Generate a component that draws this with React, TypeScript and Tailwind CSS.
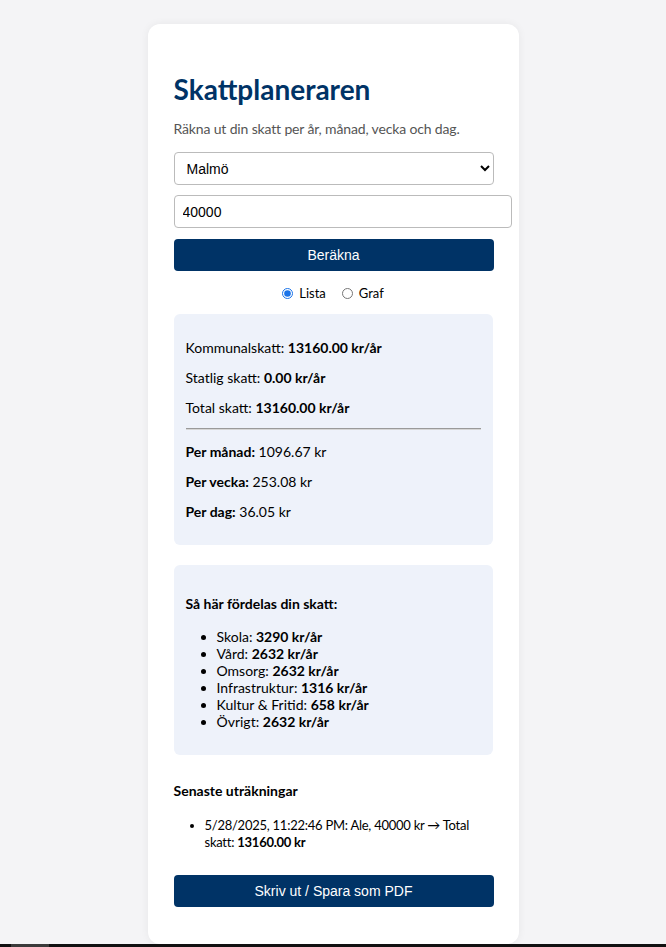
import { useState } from 'react';

const fordelning = [
  { namn: 'Skola', belopp: '3290' },
  { namn: 'Vård', belopp: '2632' },
  { namn: 'Omsorg', belopp: '2632' },
  { namn: 'Infrastruktur', belopp: '1316' },
  { namn: 'Kultur & Fritid', belopp: '658' },
  { namn: 'Övrigt', belopp: '2632' },
];

export default function App() {
  const [kommun, setKommun] = useState('Malmö');
  const [inkomst, setInkomst] = useState('40000');
  const [visning, setVisning] = useState<'lista' | 'graf'>('lista');

  return (
    <div className="min-h-[947px] bg-[#f4f4f6] pt-[24px] font-['Lato',sans-serif] text-[14px] text-black">
      {/* Kortet */}
      <div className="mx-auto w-[371px] rounded-[12px] bg-white px-[26px] pt-[48px] pb-[37px] shadow-[0_0_8px_rgba(0,0,0,0.06)]">
        <h1 className="text-[28px] leading-[34px] font-bold text-[#003366]">Skattplaneraren</h1>
        <p className="mt-[14px] leading-[18px] tracking-[-0.15px] text-[#555]">Räkna ut din skatt per år, månad, vecka och dag.</p>

        <select
          value={kommun}
          onChange={(e) => setKommun(e.target.value)}
          className="mt-[14px] block h-[33px] w-[320px] rounded-[4px] border border-[#bbb] bg-white px-[8px] font-['Liberation_Sans',sans-serif] text-[14px] text-black"
        >
          <option>Malmö</option>
          <option>Ale</option>
          <option>Stockholm</option>
          <option>Göteborg</option>
        </select>

        <input
          value={inkomst}
          onChange={(e) => setInkomst(e.target.value)}
          className="mt-[10px] block h-[33px] w-[338px] rounded-[4px] border border-[#bbb] px-[8px] font-['Liberation_Sans',sans-serif] text-[14px] text-black outline-none"
        />

        <button className="mt-[11px] block h-[32px] w-[320px] rounded-[4px] bg-[#003366] font-['Liberation_Sans',sans-serif] text-[14px] text-white">
          Beräkna
        </button>

        <div className="mt-[14px] flex items-center justify-center gap-[16px] text-[13px] leading-[16px]">
          <label className="flex items-center gap-[6px]">
            <input
              type="radio"
              checked={visning === 'lista'}
              onChange={() => setVisning('lista')}
              className="h-[11px] w-[11px] accent-[#1a73e8]"
            />
            Lista
          </label>
          <label className="flex items-center gap-[6px]">
            <input
              type="radio"
              checked={visning === 'graf'}
              onChange={() => setVisning('graf')}
              className="h-[11px] w-[11px]"
            />
            Graf
          </label>
        </div>

        {/* Resultat */}
        <div className="mt-[13px] rounded-[6px] bg-[#eef2fa] px-[12px] pt-[26px] pb-[25px]">
          <div className="flex flex-col gap-[14px] leading-[16px]">
            <p>Kommunalskatt: <b>13160.00 kr/år</b></p>
            <p>Statlig skatt: <b>0.00 kr/år</b></p>
            <p>Total skatt: <b>13160.00 kr/år</b></p>
          </div>
          <div className="mt-[12px] mb-[14px] h-[2px] w-[295px] border-t border-b border-t-[#9a9a9a] border-b-[#d6d6d6]" />
          <div className="flex flex-col gap-[14px] leading-[16px]">
            <p><b>Per månad:</b> 1096.67 kr</p>
            <p><b>Per vecka:</b> 253.08 kr</p>
            <p><b>Per dag:</b> 36.05 kr</p>
          </div>
        </div>

        {/* Fördelning */}
        <div className="mt-[20px] rounded-[6px] bg-[#eef2fa] px-[12px] pt-[31px] pb-[25px]">
          <p className="leading-[16px] font-bold">Så här fördelas din skatt:</p>
          <ul className="mt-[16px] list-disc pl-[31px] leading-[17px]">
            {fordelning.map((f) => (
              <li key={f.namn}>
                {f.namn}: <b>{f.belopp} kr/år</b>
              </li>
            ))}
          </ul>
        </div>

        {/* Historik */}
        <p className="mt-[28px] leading-[16px] font-bold">Senaste uträkningar</p>
        <ul className="mt-[18px] list-disc pl-[31px] leading-[17px]">
          <li className="text-[13px] tracking-[-0.25px]">
            5/28/2025, 11:22:46 PM: Ale, 40000 kr → Total skatt: <b>13160.00 kr</b>
          </li>
        </ul>

        <button className="mt-[24px] block h-[32px] w-[320px] rounded-[4px] bg-[#003366] font-['Liberation_Sans',sans-serif] text-[14px] text-white">
          Skriv ut / Spara som PDF
        </button>
      </div>

      {/* Aktivitetsfältet längst ner */}
      <div className="fixed right-0 bottom-0 left-0 flex h-[3px] bg-[#111]">
        <div className="ml-[11px] w-[38px] bg-[#3a3a3a]" />
      </div>
    </div>
  );
}
